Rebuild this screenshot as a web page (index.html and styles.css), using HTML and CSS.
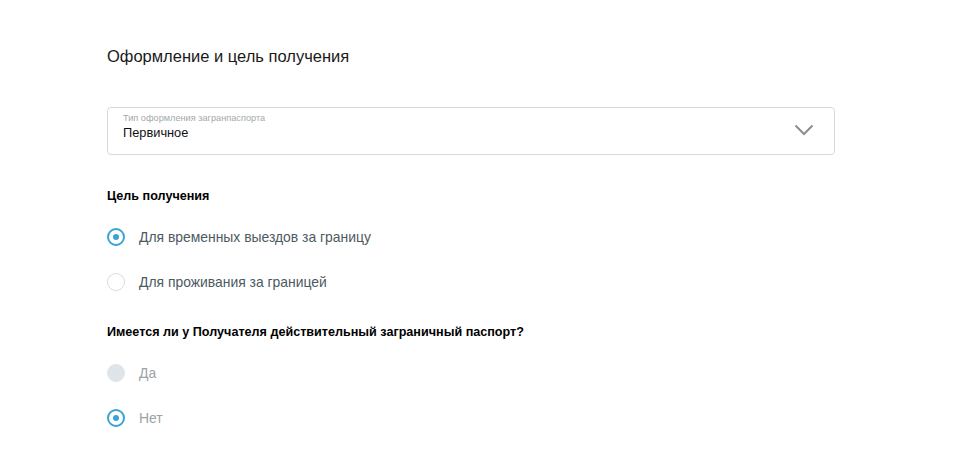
FILE: index.html
```html
<!DOCTYPE html>
<html lang="ru">
<head>
<meta charset="utf-8">
<link rel="stylesheet" href="styles.css">
</head>
<body>
<main class="form">
  <h2 class="title">Оформление и цель получения</h2>
  <div class="select">
    <div class="select-text">
      <span class="select-label">Тип оформления загранпаспорта</span>
      <span class="select-value">Первичное</span>
    </div>
    <svg class="chevron" width="20" height="12" viewBox="0 0 20 12"><path d="M1.5 1.5 L10 10 L18.5 1.5" fill="none" stroke="#8a8f93" stroke-width="2"/></svg>
  </div>
  <div class="group">
    <div class="group-title">Цель получения</div>
    <div class="option"><span class="radio checked"></span><span class="opt-text">Для временных выездов за границу</span></div>
    <div class="option"><span class="radio"></span><span class="opt-text">Для проживания за границей</span></div>
  </div>
  <div class="group">
    <div class="group-title">Имеется ли у Получателя действительный заграничный паспорт?</div>
    <div class="option"><span class="radio disabled"></span><span class="opt-text muted">Да</span></div>
    <div class="option"><span class="radio checked"></span><span class="opt-text muted">Нет</span></div>
  </div>
</main>
</body>
</html>
```
FILE: styles.css
```css
html, body {
  margin: 0;
  padding: 0;
  background: #fff;
}
body {
  font-family: "Liberation Sans", Arial, sans-serif;
  color: #000;
}
.form {
  width: 728px;
  padding: 44px 0 0 107px;
}
.title {
  margin: 0;
  font-size: 16.5px;
  font-weight: normal;
  line-height: 24px;
  color: #1a1a1a;
}
.select {
  margin-top: 39px;
  height: 46px;
  border: 1px solid #d6d9db;
  border-radius: 4px;
  display: flex;
  align-items: center;
  justify-content: space-between;
  padding: 0 20px 0 15px;
}
.select-text {
  display: flex;
  flex-direction: column;
}
.select-label {
  font-size: 9.2px;
  line-height: 11px;
  color: #a3a8ab;
  margin-top: -9px;
}
.select-value {
  font-size: 12.8px;
  line-height: 17px;
  color: #111;
}
.chevron {
  display: block;
  margin-top: -2px;
}
.group {
  margin-top: 32px;
}
.group-title {
  font-size: 12.6px;
  font-weight: bold;
  line-height: 18px;
  color: #000;
}
.option {
  display: flex;
  align-items: center;
  height: 18px;
  margin-top: 23px;
}
.group .option + .option {
  margin-top: 27px;
}
.radio {
  box-sizing: border-box;
  width: 18px;
  height: 18px;
  border-radius: 50%;
  border: 1px solid #d9dde0;
  margin-right: 14px;
  position: relative;
  flex: none;
}
.radio.checked {
  border: 2px solid #3aa3d6;
}
.radio.checked::after {
  content: "";
  position: absolute;
  left: 50%;
  top: 50%;
  width: 6px;
  height: 6px;
  margin: -3px 0 0 -3px;
  border-radius: 50%;
  background: #3aa3d6;
}
.radio.disabled {
  background: #dfe4e8;
  border-color: #dfe4e8;
}
.opt-text {
  font-size: 13.9px;
  line-height: 18px;
  color: #4c5a61;
}
.opt-text.muted {
  color: #9aa3a8;
}
```
